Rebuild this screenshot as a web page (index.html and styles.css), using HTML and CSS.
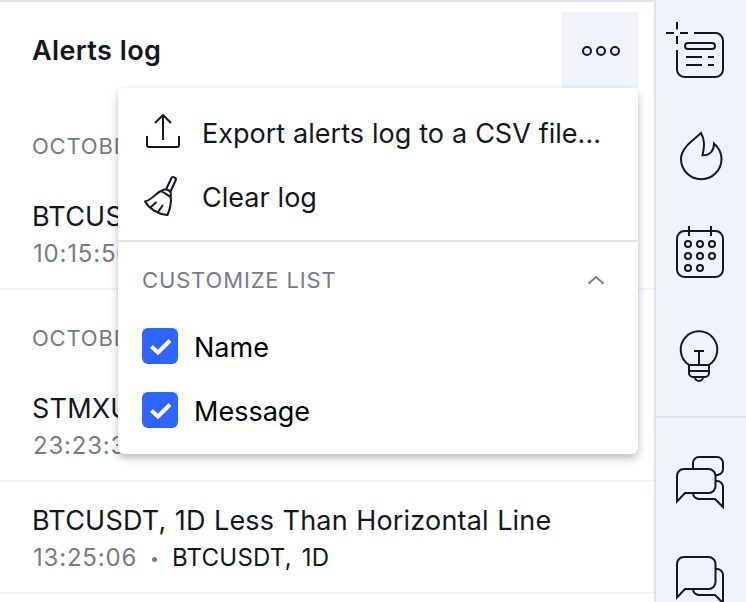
FILE: index.html
```html
<!DOCTYPE html>
<html lang="en">
<head>
  <meta charset="UTF-8">
  <title>Alerts log</title>
  <link rel="stylesheet" href="styles.css">
</head>

<body>
  <div class="app">

    <main class="log">
      <header class="log-header">
        <h1>Alerts log</h1>
        <button class="more-btn" aria-label="More">
          <svg width="40" height="12" viewBox="0 0 40 12">
            <circle cx="6" cy="6" r="4"/>
            <circle cx="20" cy="6" r="4"/>
            <circle cx="34" cy="6" r="4"/>
          </svg>
        </button>

        <!-- Dropdown menu -->
        <div class="menu">
          <div class="menu-actions">
            <a class="menu-item">
              <svg width="44" height="64" viewBox="0 0 44 64">
                <path d="M5 34v9a2 2 0 0 0 2 2h28a2 2 0 0 0 2-2v-9M21 38V13.500M13 21l8-8 8 8"/>
              </svg>
              <span>Export alerts log to a CSV file...</span>
            </a>
            <a class="menu-item">
              <svg width="44" height="64" viewBox="0 0 44 64">
                <path d="M24 23.500l5.200-11a2.400 2.400 0 0 1 4.400 2L28.500 25.500M19 25c3-2.500 8.500-2 9.800 2v4.500c-3-3-6-4.500-9.800-6.500zM19 25C14 27 10 34 3 35.500c4 7 13 13 22.500 13.500 2.500-6 4-12 3.300-18M9 41l5.500-5M16 46l5-7"/>
              </svg>
              <span>Clear log</span>
            </a>
          </div>
          <div class="menu-section">
            <span>CUSTOMIZE LIST</span>
            <svg width="20" height="12" viewBox="0 0 20 12">
              <path d="M2.500 9.500L10 3l7.500 6.500"/>
            </svg>
          </div>
          <label class="check-row">
            <span class="check"><svg width="36" height="36" viewBox="0 0 36 36"><path d="M9.500 18.500l6.500 6 12-12"/></svg></span>
            <span class="check-label">Name</span>
          </label>
          <label class="check-row">
            <span class="check"><svg width="36" height="36" viewBox="0 0 36 36"><path d="M9.500 18.500l6.500 6 12-12"/></svg></span>
            <span class="check-label">Message</span>
          </label>
        </div>
      </header>

      <h2 class="day">OCTOBER 12</h2>
      <article class="alert">
        <div class="alert-title">BTCUSDT</div>
        <div class="alert-info"><time>10:15:56</time></div>
      </article>

      <h2 class="day">OCTOBER 11</h2>
      <article class="alert">
        <div class="alert-title">STMXUSDT</div>
        <div class="alert-info"><time>23:23:35</time><i></i><span>STMXUSDT</span></div>
      </article>
      <article class="alert">
        <div class="alert-title">BTCUSDT, 1D Less Than Horizontal Line</div>
        <div class="alert-info"><time>13:25:06</time><i></i><span>BTCUSDT, 1D</span></div>
      </article>
    </main>

    <!-- Right toolbar -->
    <nav class="toolbar">
      <div class="tools">
        <svg viewBox="0 0 90 100">
          <path d="M38 29h21.500a7.500 7.500 0 0 1 7.500 7.500v29a7.500 7.500 0 0 1-7.500 7.500h-31a7.500 7.500 0 0 1-7.500-7.500V46M21 18v7.500M21 32v8M10 29h8M24 29h8M30 53h16M52 53h6M30 61h16M52 61h6"/>
          <rect x="29" y="39" width="30" height="6" rx="3"/>
        </svg>
        <svg viewBox="0 0 90 100">
          <path d="M45 29C39 35 25 43 25 55a20 20 0 0 0 40.500 0c0-6-3-11.500-7.500-15.500 0 7-4 12-11.500 11.800 1.500-8 3-14-1.500-22.300z"/>
        </svg>
        <svg viewBox="0 0 90 100">
          <rect x="21" y="27" width="46" height="46" rx="7.500"/>
          <path d="M33 22v10M55 22v10"/>
          <circle cx="32" cy="40" r="3"/><circle cx="44" cy="40" r="3"/><circle cx="56" cy="40" r="3"/>
          <circle cx="32" cy="52" r="3"/><circle cx="44" cy="52" r="3"/><circle cx="56" cy="52" r="3"/>
          <circle cx="32" cy="64" r="3"/><circle cx="44" cy="64" r="3"/>
        </svg>
        <svg viewBox="0 0 90 100">
          <path d="M33 61a18.300 18.300 0 1 1 20 0zM33 61v8a4 4 0 0 0 4 4h12a4 4 0 0 0 4-4v-8M33 67h20M38 47h10M43 47v14M39 73a4 4 0 0 0 8 0"/>
        </svg>
      </div>
      <div class="tools">
        <svg viewBox="0 0 90 100">
          <path d="M21 69.500V44a7 7 0 0 1 7-7h24.500a7 7 0 0 1 7 7v10a7 7 0 0 1-7 7H29zM37 37v-6a6 6 0 0 1 6-6h18a6 6 0 0 1 6 6v6a6 6 0 0 1-6 6h-1.500M60 49h1a6 6 0 0 1 6 6v20l-8-8H43a6 6 0 0 1-6-6"/>
        </svg>
        <svg viewBox="0 0 90 100">
          <path d="M21 65.500V32a7 7 0 0 1 7-7h24.500a7 7 0 0 1 7 7v18a7 7 0 0 1-7 7H29zM60 37h1a6 6 0 0 1 6 6v28l-8-8H43a6 6 0 0 1-6-6"/>
        </svg>
      </div>
    </nav>

  </div>
</body>
</html>
```
FILE: styles.css
```css
* {
  box-sizing: border-box;
}

body {
  margin: 0;
  font-family: Inter, 'Liberation Sans', sans-serif;
  background: #fff;
  color: #131722;
}

svg {
  display: block;
  flex: none;
  fill: none;
  stroke: #131722;
  stroke-width: 2;
}

.app {
  display: flex;
  height: 602px;
  overflow: hidden;
}

.log {
  flex: 1;
  border-top: 2px solid #e0e3eb;
}

/* Header */
.log-header {
  position: relative;
  display: flex;
  justify-content: space-between;
  height: 96px;
  padding: 10px 16px 0 32px;
}

h1 {
  margin: 0;
  font-size: 27px;
  font-weight: 600;
  line-height: 78px;
  letter-spacing: 0.35px;
  word-spacing: 0.5px;
}

.more-btn {
  display: flex;
  align-items: center;
  justify-content: center;
  width: 76px;
  height: 76px;
  padding: 2px 0 0 2px;
  border: 0;
  background: #f0f3fa;
}

/* Alerts */
.day {
  height: 80px;
  margin: 0;
  padding-left: 32px;
  font-size: 22px;
  font-weight: 400;
  line-height: 97px;
  letter-spacing: 0.8px;
  color: #787b86;
}

.alert {
  height: 112px;
  padding: 20px 32px 0;
  border-bottom: 2px solid #f0f3fa;
}

.alert-title {
  font-size: 27px;
  line-height: 38px;
  letter-spacing: 0.2px;
  word-spacing: 0.5px;
  white-space: nowrap;
}

.alert-info {
  display: flex;
  align-items: center;
  font-size: 24px;
  line-height: 36px;
  letter-spacing: 0.2px;
  word-spacing: 3px;
}

.alert-info time {
  padding-left: 1px;
  letter-spacing: 0.8px;
  color: #787b86;
}

.alert-info i {
  width: 5px;
  height: 5px;
  margin: 2px 15px 0;
  border-radius: 50%;
  background: #787b86;
}

/* Dropdown menu */
.menu {
  position: absolute;
  top: 86px;
  right: 16px;
  z-index: 2;
  width: 520px;
  height: 366px;
  border-radius: 6px;
  background: #fff;
  box-shadow: 0 4px 8px rgba(0, 0, 0, 0.27);
}

.menu-actions {
  height: 154px;
  padding: 14px 24px 0;
  border-bottom: 2px solid #e0e3eb;
}

.menu-item {
  display: flex;
  gap: 16px;
  height: 64px;
  font-size: 27px;
  line-height: 64px;
  word-spacing: 0.4px;
  white-space: nowrap;
}

.menu-item svg {
  stroke-linejoin: round;
}

.menu-section {
  display: flex;
  align-items: center;
  justify-content: space-between;
  height: 72px;
  padding: 3px 32px 0 24px;
  font-size: 22px;
  letter-spacing: 0.85px;
  color: #787b86;
}

.menu-section svg {
  stroke: #787b86;
}

.check-row {
  display: flex;
  align-items: center;
  gap: 16px;
  height: 64px;
  padding-left: 24px;
  font-size: 27px;
  color: #000;
}

.check {
  width: 36px;
  height: 36px;
  border-radius: 6px;
  background: #2e65ff;
}

.check svg {
  stroke: #fff;
  stroke-width: 4;
}

.check-label {
  padding-top: 2px;
}

/* Right toolbar */
.toolbar {
  width: 92px;
  border-left: 2px solid #e0e3eb;
  background: #f0f3fa;
}

.tools {
  padding-top: 14px;
}

.tools:first-child {
  height: 418px;
  padding-top: 4px;
  border-bottom: 2px solid #e0e3eb;
}

.tools svg {
  width: 90px;
  height: 100px;
}
```
